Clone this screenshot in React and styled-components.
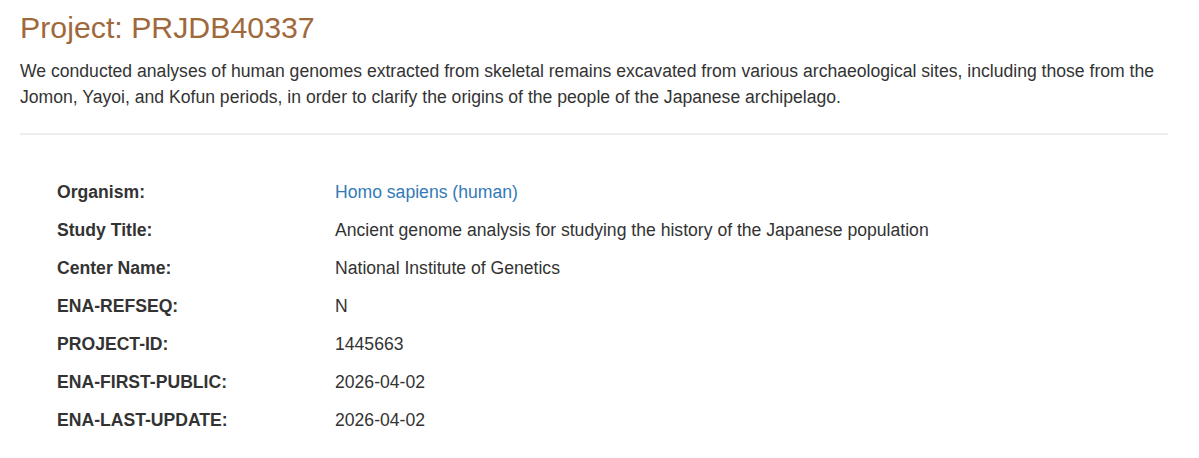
import React from 'react'
import styled, { createGlobalStyle } from 'styled-components'

const GlobalStyle = createGlobalStyle`
  body {
    margin: 0;
    background: #fff;
    font-family: "Liberation Sans", Arial, sans-serif;
    color: #333;
  }
`

const fields = [
  { label: 'Organism:', value: 'Homo sapiens (human)', link: true },
  { label: 'Study Title:', value: 'Ancient genome analysis for studying the history of the Japanese population' },
  { label: 'Center Name:', value: 'National Institute of Genetics' },
  { label: 'ENA-REFSEQ:', value: 'N' },
  { label: 'PROJECT-ID:', value: '1445663' },
  { label: 'ENA-FIRST-PUBLIC:', value: '2026-04-02' },
  { label: 'ENA-LAST-UPDATE:', value: '2026-04-02' },
]

const Page = styled.div`
  padding: 0 31px 0 20px;
`

const Title = styled.h1`
  margin: 10px 0 0;
  font-size: 30.3px;
  font-weight: 400;
  line-height: 36px;
  color: #a0693c;
`

const Description = styled.p`
  margin: 12px 0 0;
  font-size: 17.6px;
  line-height: 26px;
`

const Divider = styled.hr`
  margin: 23px 0 0;
  border: 0;
  border-top: 2px solid #eee;
`

const Table = styled.div`
  display: grid;
  grid-template-columns: 278px 1fr;
  margin: 38px 0 0 37px;
  font-size: 17.6px;
`

const Label = styled.div`
  font-weight: 700;
  line-height: 38px;
`

const Value = styled.div`
  line-height: 38px;
  color: ${(props) => (props.$link ? '#337ab7' : '#333')};
`

const App = () => (
  <>
    <GlobalStyle />
    <Page>
      <Title>Project: PRJDB40337</Title>
      <Description>
        We conducted analyses of human genomes extracted from skeletal remains excavated from various
        archaeological sites, including those from the Jomon, Yayoi, and Kofun periods, in order to
        clarify the origins of the people of the Japanese archipelago.
      </Description>
      <Divider />
      <Table>
        {fields.map((f) => (
          <React.Fragment key={f.label}>
            <Label>{f.label}</Label>
            <Value $link={f.link}>{f.value}</Value>
          </React.Fragment>
        ))}
      </Table>
    </Page>
  </>
)

export default App
